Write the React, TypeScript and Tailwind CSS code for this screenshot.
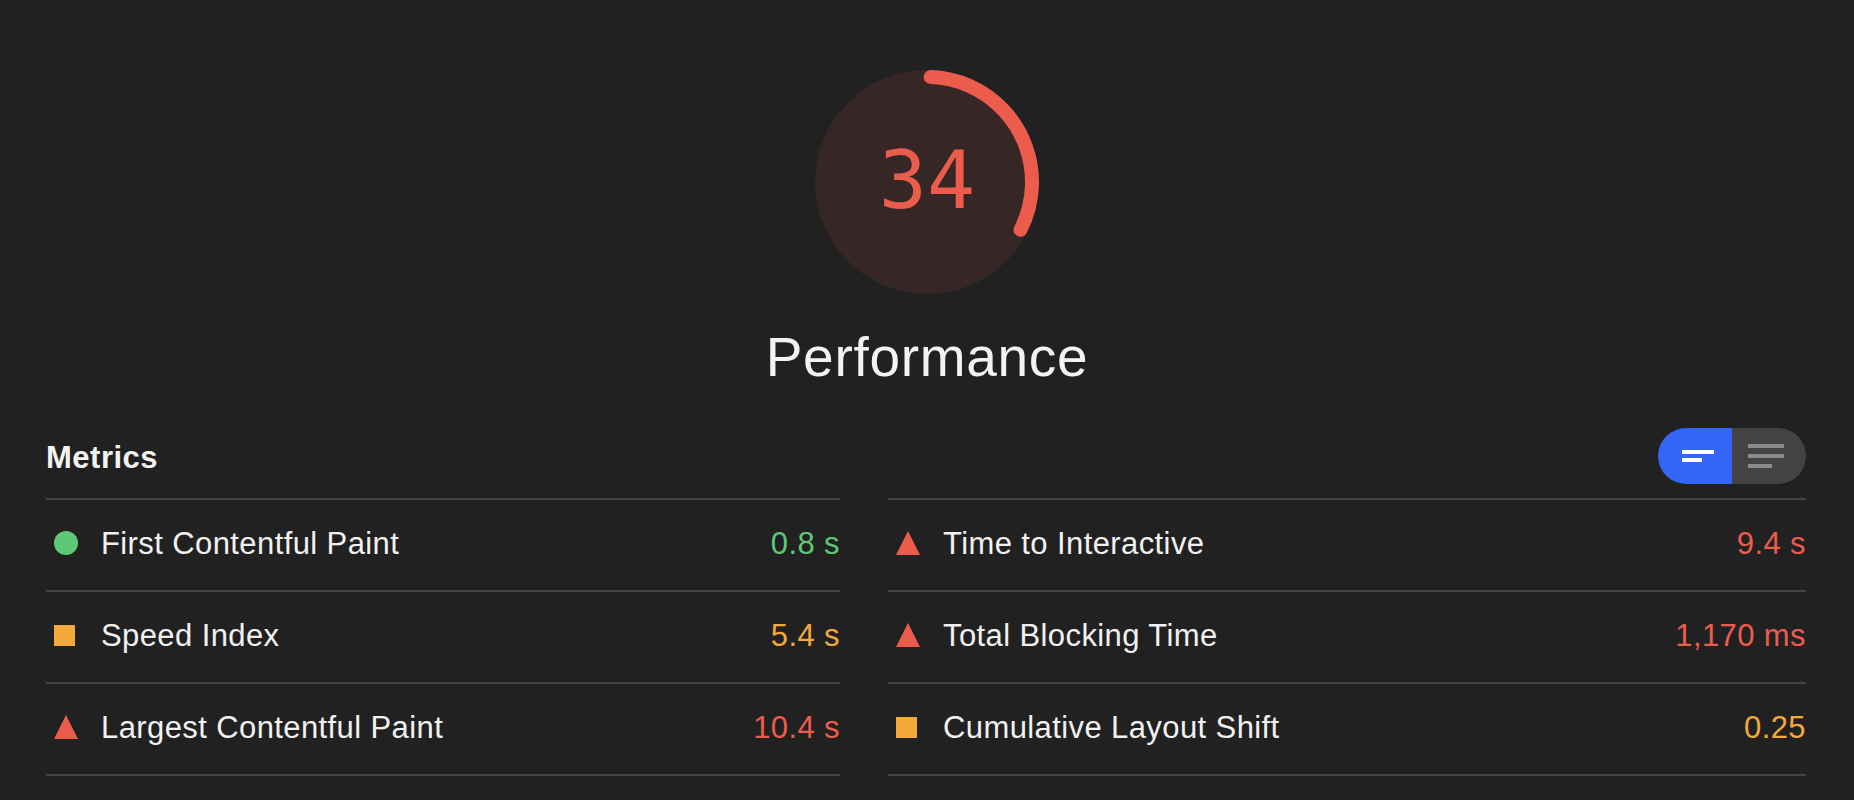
import React from 'react';

type Rating = 'pass' | 'average' | 'fail';

type Metric = {
  label: string;
  value: string;
  rating: Rating;
};

const left: Metric[] = [
  { label: 'First Contentful Paint', value: '0.8 s', rating: 'pass' },
  { label: 'Speed Index', value: '5.4 s', rating: 'average' },
  { label: 'Largest Contentful Paint', value: '10.4 s', rating: 'fail' },
];

const right: Metric[] = [
  { label: 'Time to Interactive', value: '9.4 s', rating: 'fail' },
  { label: 'Total Blocking Time', value: '1,170 ms', rating: 'fail' },
  { label: 'Cumulative Layout Shift', value: '0.25', rating: 'average' },
];

const valueColor: Record<Rating, string> = {
  pass: 'text-[#5dc977]',
  average: 'text-[#f4a93c]',
  fail: 'text-[#ec5c4d]',
};

function RatingIcon({ rating }: { rating: Rating }) {
  if (rating === 'pass') {
    return <span className="block h-6 w-6 rounded-full bg-[#5dc977]" />;
  }
  if (rating === 'average') {
    return <span className="block h-[21px] w-[21px] bg-[#f4a93c]" />;
  }
  return (
    <span className="block h-0 w-0 border-x-[12px] border-b-[24px] border-x-transparent border-b-[#ec5c4d]" />
  );
}

function MetricRow({ m }: { m: Metric }) {
  return (
    <div className="flex h-[92px] items-center border-b-2 border-[#434343] pb-[4px]">
      <div className="ml-2 flex w-6 items-center">
        <RatingIcon rating={m.rating} />
      </div>
      <span className="ml-[23px] flex-1 text-[31px] leading-[31px] tracking-[0.4px] text-[#f1f1f1]">
        {m.label}
      </span>
      <span className={`text-[31px] leading-[31px] tracking-[0.4px] ${valueColor[m.rating]}`}>{m.value}</span>
    </div>
  );
}

function Gauge({ score }: { score: number }) {
  const r = 105;
  const c = 2 * Math.PI * r;
  const arc = (r * 115 * Math.PI) / 180;
  return (
    <svg width="224" height="224" viewBox="0 0 224 224">
      <circle cx="112" cy="112" r="112" fill="#362626" />
      <circle
        cx="112"
        cy="112"
        r={r}
        fill="none"
        stroke="#ec5c4d"
        strokeWidth="14"
        strokeLinecap="round"
        strokeDasharray={`${arc} ${c}`}
        transform="rotate(-88 112 112)"
      />
      <text
        x="112"
        y="138"
        textAnchor="middle"
        fill="#ec5c4d"
        fontSize="80"
        fontFamily="'DejaVu Sans Mono', monospace"
      >
        {score}
      </text>
    </svg>
  );
}

function ViewToggle() {
  return (
    <div className="flex h-14 w-[148px] overflow-hidden rounded-full">
      <button className="flex w-[74px] flex-col items-start justify-center gap-[4px] bg-[#3465f6] pl-6">
        <span className="block h-[4px] w-8 bg-white" />
        <span className="block h-[4px] w-5 bg-white" />
      </button>
      <button className="flex flex-1 flex-col items-start justify-center gap-[6px] bg-[#434343] pl-4">
        <span className="block h-[4px] w-9 bg-[#8b8b8b]" />
        <span className="block h-[4px] w-9 bg-[#8b8b8b]" />
        <span className="block h-[4px] w-6 bg-[#8b8b8b]" />
      </button>
    </div>
  );
}

export default function App() {
  return (
    <div
      className="min-h-screen bg-[#212121] pt-[70px]"
      style={{ fontFamily: "'Liberation Sans', Arial, sans-serif" }}
    >
      <div className="flex flex-col items-center">
        <Gauge score={34} />
        <h1 className="mt-[36px] text-[55px] leading-[55px] tracking-[0.7px] text-[#f3f3f3]">Performance</h1>
      </div>

      <div className="mt-[43px] pl-[46px] pr-[48px]">
        <div className="flex h-14 items-center justify-between">
          <h2 className="pt-[3px] text-[31px] font-bold leading-[31px] tracking-[0.5px] text-[#f3f3f3]">Metrics</h2>
          <ViewToggle />
        </div>

        <div className="mt-[14px] flex gap-12">
          <div className="w-[794px] border-t-2 border-[#434343]">
            {left.map((m) => (
              <MetricRow key={m.label} m={m} />
            ))}
          </div>
          <div className="flex-1 border-t-2 border-[#434343]">
            {right.map((m) => (
              <MetricRow key={m.label} m={m} />
            ))}
          </div>
        </div>
      </div>
    </div>
  );
}
